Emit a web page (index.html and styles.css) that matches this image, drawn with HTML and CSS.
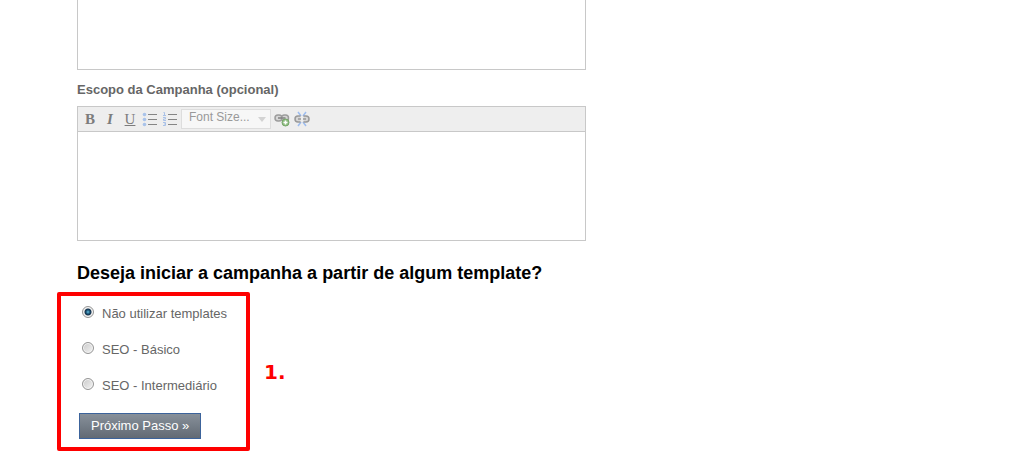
FILE: index.html
```
<!DOCTYPE html>
<html lang="pt-BR">
<head>
<meta charset="utf-8">
<title>Nova campanha</title>
<link rel="stylesheet" href="styles.css">
</head>
<body>
<main class="page">
  <textarea class="description" aria-label="Descrição da Campanha"></textarea>

  <label class="field-label" for="scope">Escopo da Campanha (opcional)</label>
  <div class="editor">
    <div class="toolbar">
      <button class="tool" type="button"><b>B</b></button>
      <button class="tool" type="button"><b><i>I</i></b></button>
      <button class="tool" type="button"><u>U</u></button>
      <button class="tool" type="button" aria-label="Lista">
        <svg class="icon" viewBox="0 0 16 16">
          <g fill="#a9c3ea"><circle cx="2.5" cy="3.5" r="1.8"/><circle cx="2.5" cy="8.5" r="1.8"/><circle cx="2.5" cy="13.5" r="1.8"/></g>
          <path d="M6 3.5h9M6 8.5h9M6 13.5h9" stroke="#858585"/>
        </svg>
      </button>
      <button class="tool" type="button" aria-label="Lista numerada">
        <svg class="icon" viewBox="0 0 16 16">
          <path d="M1.5 1.5h1v3M1 4.5h3M1 6.5h2.5v1.5h-2v1.5h2.5M1 11.5h2.500v3H1M2 13h1.500" fill="none" stroke="#a8c1e8"/>
          <path d="M6 3.5h9M6 8.5h9M6 13.5h9" stroke="#858585"/>
        </svg>
      </button>
      <div class="size-picker">
        <select class="size-select" aria-label="Font Size"><option>Font Size...</option></select>
        <svg class="size-arrow" viewBox="0 0 8 5"><path d="M0 0h8L4 5z" fill="#d3d3d3"/></svg>
      </div>
      <button class="tool" type="button" aria-label="Inserir link">
        <svg class="icon" viewBox="0 0 16 16">
          <g fill="#d6d6d6" stroke="#9c9c9c" stroke-width="1.5"><rect x="1" y="4" width="7" height="6" rx="3"/><rect x="7.500" y="4" width="7" height="6" rx="3"/></g>
          <path d="M4 7h7.500" stroke="#808080" stroke-width="1.500"/>
          <circle cx="11.500" cy="11.500" r="3.500" fill="#8fbd82" stroke="#74a568"/>
          <path d="M9.500 11.500h4M11.500 9.500v4" stroke="#fff" stroke-width="1.500"/>
        </svg>
      </button>
      <button class="tool" type="button" aria-label="Remover link">
        <svg class="icon" viewBox="0 0 16 16">
          <path d="M4 1l3 4M12 1L9 5M4 15l3-4M12 15l-3-4" stroke="#9dbdf0" stroke-width="1.500"/>
          <path d="M6.500 5H4a3 3 0 0 0 0 6h2.500zM9.500 5H12a3 3 0 0 1 0 6H9.500z" fill="#d6d6d6"/>
          <path d="M6.500 5H4a3 3 0 0 0 0 6h2.500M9.500 5H12a3 3 0 0 1 0 6H9.500M4 8h3M9 8h3" fill="none" stroke="#999" stroke-width="1.500"/>
        </svg>
      </button>
    </div>
    <textarea class="editor-text" id="scope"></textarea>
  </div>

  <h2 class="heading">Deseja iniciar a campanha a partir de algum template?</h2>
  <div class="step">
    <form class="templates">
      <label class="choice"><input class="radio" type="radio" name="template" checked>Não utilizar templates</label>
      <label class="choice"><input class="radio" type="radio" name="template">SEO - Básico</label>
      <label class="choice"><input class="radio" type="radio" name="template">SEO - Intermediário</label>
      <button class="next" type="button">Próximo Passo »</button>
    </form>
    <strong class="step-number">1.</strong>
  </div>
</main>
</body>
</html>
```
FILE: styles.css
```
* {
  box-sizing: border-box;
}

body {
  margin: 0;
  background: #fff;
  color: #666;
  font: 13px/18px "Liberation Sans", Arial, sans-serif;
}

.page {
  max-width: 586px;
  padding-left: 77px;
}

.description {
  display: block;
  width: 100%;
  height: 70px;
  border: 1px solid #c8c8c8;
  border-top: 0;
  outline: 0;
  resize: none;
}

.field-label {
  display: block;
  padding: 11px 0 7px;
  font-weight: bold;
}

.editor {
  border: 1px solid #c8c8c8;
}

.toolbar {
  display: flex;
  align-items: center;
  height: 25px;
  padding: 0 2px;
  border-bottom: 1px solid #c8c8c8;
  background: #eee;
}

.tool {
  display: flex;
  align-items: center;
  justify-content: center;
  width: 20px;
  height: 20px;
  padding: 0;
  border: 0;
  background: none;
  color: #7c7c7c;
  font: 15px/22px "Liberation Serif", "Times New Roman", serif;
}

.icon {
  width: 16px;
  height: 16px;
  fill: none;
}

.size-picker {
  position: relative;
  width: 90px;
  margin: 0 1px;
}

.size-select {
  display: block;
  width: 100%;
  height: 20px;
  padding: 0 16px 4px 7px;
  appearance: none;
  border: 1px solid #ddd;
  border-radius: 0;
  background: #f7f7f7;
  color: #999;
  font: 12px/14px "Liberation Sans", Arial, sans-serif;
}

.size-arrow {
  position: absolute;
  top: 8px;
  right: 5px;
  width: 8px;
  height: 5px;
  pointer-events: none;
}

.editor-text {
  display: block;
  width: 100%;
  height: 108px;
  border: 0;
  outline: 0;
  resize: none;
}

.heading {
  margin: 20px 0 7px;
  color: #000;
  font-size: 18px;
  line-height: 24px;
}

.step {
  display: flex;
  align-items: center;
  gap: 14px;
  margin-left: -20px;
}

.templates {
  display: grid;
  justify-items: start;
  row-gap: 18px;
  width: 193px;
  padding: 9px 18px 8px;
  border: 4px solid #fe0000;
  border-radius: 2px;
}

.choice {
  display: flex;
  align-items: center;
  gap: 8px;
  padding-left: 3px;
  white-space: nowrap;
}

.radio {
  flex: none;
  width: 12px;
  height: 12px;
  margin: 0 0 4px;
  appearance: none;
  border: 1px solid #959595;
  border-radius: 50%;
  background: linear-gradient(135deg, #c9c9c9, #f4f4f4);
  box-shadow: inset 0 0 0 1px #f6f6f6;
}

.radio:checked {
  background: radial-gradient(circle, #68c3e5 0, #174e70 2px, #17334d 3px, #e6e6e6 4px);
}

.next {
  height: 26px;
  padding: 0 11px;
  border: 1px solid #3c639b;
  background: linear-gradient(#87909a, #626a74);
  color: #fff;
  font: 13px/20px "Liberation Sans", Arial, sans-serif;
}

.step-number {
  color: #fe0000;
  font: bold 20px/24px "DejaVu Sans", Verdana, sans-serif;
}
```
